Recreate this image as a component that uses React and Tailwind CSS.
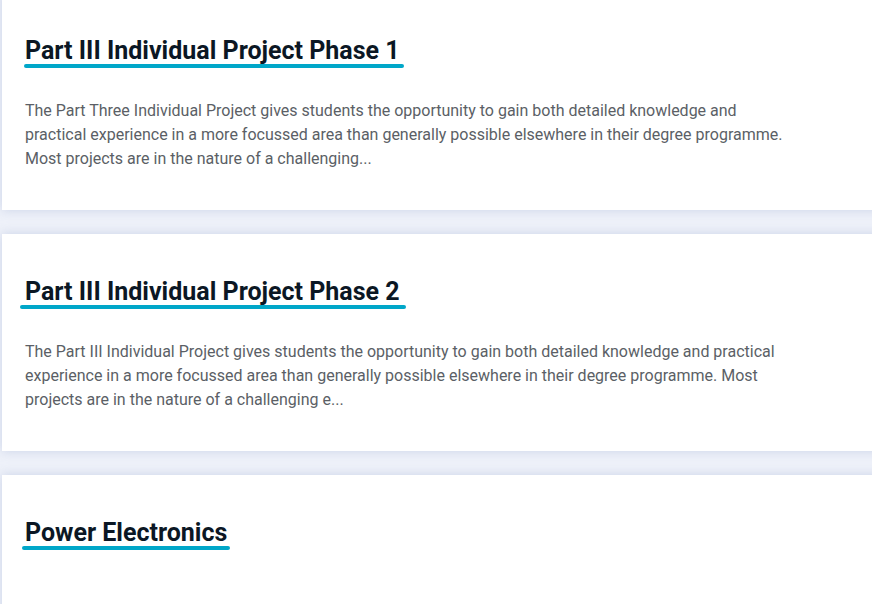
const modules = [
  {
    id: "p3-1",
    title: "Part III Individual Project Phase 1",
    bar: "ml-[-1px] w-[380px]",
    summary:
      "The Part Three Individual Project gives students the opportunity to gain both detailed knowledge and practical experience in a more focussed area than generally possible elsewhere in their degree programme. Most projects are in the nature of a challenging...",
  },
  {
    id: "p3-2",
    title: "Part III Individual Project Phase 2",
    bar: "ml-[-5px] w-[386px]",
    summary:
      "The Part III Individual Project gives students the opportunity to gain both detailed knowledge and practical experience in a more focussed area than generally possible elsewhere in their degree programme. Most projects are in the nature of a challenging e...",
  },
  {
    id: "pe",
    title: "Power Electronics",
    bar: "ml-[-3px] w-[208px]",
    summary: "",
  },
];

function ModuleCard({ module }) {
  return (
    <div className="bg-white shadow-[0_0_10px_rgba(160,175,210,0.45)] pl-[23px] pr-10 pt-[45px] pb-[39px] min-h-[217px]">
      <div className="flex flex-col items-start">
        <h2 className="text-[25px] leading-[26px] font-bold text-[#0b1724]">
          {module.title}
        </h2>
        <div className={`h-[4px] rounded-full bg-[#00a7c9] ${module.bar}`} />
      </div>
      {module.summary && (
        <p className="mt-[31px] max-w-[770px] text-[16px] leading-6 text-[#5b5f66]">
          {module.summary}
        </p>
      )}
    </div>
  );
}

export default function App() {
  return (
    <div
      className="h-[604px] overflow-hidden bg-[#eef1f9] pl-[2px]"
      style={{ fontFamily: "Roboto, 'Liberation Sans', sans-serif" }}
    >
      <div className="-mt-[7px] flex flex-col gap-6 w-[880px]">
        {modules.map((m) => (
          <ModuleCard key={m.id} module={m} />
        ))}
      </div>
    </div>
  );
}
